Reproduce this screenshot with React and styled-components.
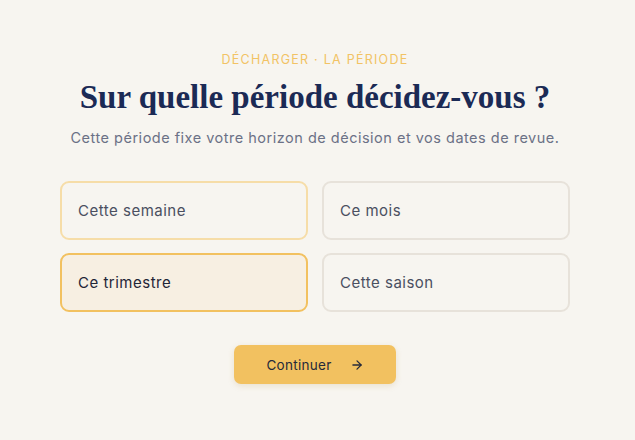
import styled, { createGlobalStyle } from "styled-components";
import { useState } from "react";

const periods = ["Cette semaine", "Ce mois", "Ce trimestre", "Cette saison"];

export default function App() {
  const [selected, setSelected] = useState("Ce trimestre");
  const [hovered] = useState("Cette semaine");

  return (
    <>
      <GlobalStyle />
      <Page>
        <Main>
          <Eyebrow>Décharger · La période</Eyebrow>
          <Title>Sur quelle période décidez-vous ?</Title>
          <Subtitle>
            Cette période fixe votre horizon de décision et vos dates de revue.
          </Subtitle>
          <Grid>
            {periods.map((p) => (
              <Option
                key={p}
                $selected={selected === p}
                $hover={hovered === p}
                onClick={() => setSelected(p)}
              >
                {p}
              </Option>
            ))}
          </Grid>
          <Button>
            Continuer
            <svg
              width="14"
              height="14"
              viewBox="0 0 24 24"
              fill="none"
              stroke="currentColor"
              strokeWidth="2.2"
              strokeLinecap="round"
              strokeLinejoin="round"
            >
              <path d="M5 12h14" />
              <path d="m12 5 7 7-7 7" />
            </svg>
          </Button>
        </Main>
      </Page>
    </>
  );
}

const GlobalStyle = createGlobalStyle`
  body {
    margin: 0;
    background: #f7f5f0;
    font-family: "Inter", "Noto Sans", sans-serif;
  }
`;

const Page = styled.div`
  min-height: 440px;
  display: flex;
  justify-content: center;
  padding-right: 5px;
`;

const Main = styled.main`
  width: 510px;
  display: flex;
  flex-direction: column;
  align-items: center;
  padding-top: 52px;
`;

const Eyebrow = styled.div`
  font-size: 12.5px;
  letter-spacing: 0.1em;
  text-transform: uppercase;
  color: #f2c364;
  line-height: 16px;
`;

const Title = styled.h1`
  margin: 9px 0 0;
  font-family: "Liberation Serif", serif;
  font-weight: 700;
  font-size: 33px;
  line-height: 40px;
  color: #1b2a55;
`;

const Subtitle = styled.p`
  margin: 11px 0 0;
  font-size: 14.5px;
  line-height: 20px;
  letter-spacing: 0.5px;
  color: #6b7186;
`;

const Grid = styled.div`
  margin-top: 33px;
  width: 100%;
  display: grid;
  grid-template-columns: 1fr 1fr;
  gap: 13px 14px;
`;

const Option = styled.button`
  height: 59px;
  box-sizing: border-box;
  border-radius: 9px;
  border: 2px solid
    ${({ $selected, $hover }) =>
      $selected ? "#f2c160" : $hover ? "#f6dda8" : "#e7e2da"};
  background: ${({ $selected }) => ($selected ? "#f7efe2" : "#f7f5f0")};
  padding: 0 16px;
  text-align: left;
  font-family: inherit;
  font-size: 15px;
  letter-spacing: 0.5px;
  color: ${({ $selected }) => ($selected ? "#1f2537" : "#4a4f60")};
  cursor: pointer;
`;

const Button = styled.button`
  margin-top: 33px;
  width: 162px;
  height: 39px;
  border: none;
  border-radius: 7px;
  background: #f2c160;
  box-shadow: 0 2px 6px rgba(180, 140, 60, 0.18);
  display: flex;
  align-items: center;
  justify-content: center;
  gap: 18px;
  font-family: inherit;
  font-size: 13.5px;
  letter-spacing: 0.3px;
  color: #262a3a;
  cursor: pointer;
`;
